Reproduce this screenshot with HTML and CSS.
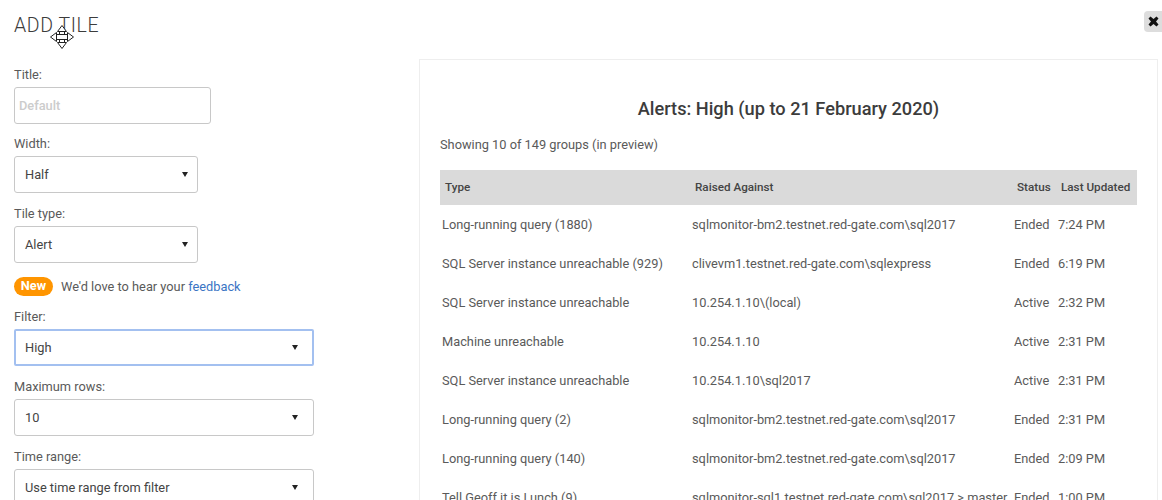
FILE: index.html
```html
<!DOCTYPE html>
<html>
<head>
    <meta name="viewport" content="width=device-width, initial-scale=1">
    <title>Add tile</title>
    <link rel="stylesheet" href="styles.css">
</head>
<body>
    <main>
        <header class="top">
            <h1>ADD TILE</h1>
            <button class="close" aria-label="Close">
                <svg width="11" height="11" viewBox="0 0 11 11"><path d="M2.5 0.5 5.5 3 8.5 0.5 10.5 2.5 8 5.5 10.5 8.5 8.5 10.5 5.5 8 2.5 10.5 0.5 8.5 3 5.5 0.5 2.5z" fill="#111"/></svg>
            </button>
        </header>
        <svg class="move-cursor" width="24" height="24" viewBox="0 0 24 24" fill="#fff" stroke="#222" stroke-width="1">
            <path d="M9.5 6.5H14.5V17.5H9.5z"/>
            <path d="M6.5 9.5H17.5V14.5H6.5z"/>
            <path d="M10 10H14V14H10z" stroke="none"/>
            <path d="M12 .5 16.5 6.5H7.5z"/>
            <path d="M12 23.5 16.5 17.5H7.5z"/>
            <path d="M.5 12 6.5 7.5V16.5z"/>
            <path d="M23.5 12 17.5 7.5V16.5z"/>
        </svg>

        <div class="content">
            <form class="settings">
                <div class="field">
                    <label>Title:</label>
                    <input class="text-input" type="text" placeholder="Default">
                </div>
                <div class="field">
                    <label>Width:</label>
                    <div class="select narrow">Half</div>
                </div>
                <div class="field">
                    <label>Tile type:</label>
                    <div class="select narrow">Alert</div>
                </div>
                <div class="notice">
                    <span class="badge">New</span>
                    <span>We'd love to hear your <a href="#">feedback</a></span>
                </div>
                <div class="field">
                    <label>Filter:</label>
                    <div class="select focused">High</div>
                </div>
                <div class="field">
                    <label>Maximum rows:</label>
                    <div class="select">10</div>
                </div>
                <div class="field">
                    <label>Time range:</label>
                    <div class="select">Use time range from filter</div>
                </div>
            </form>

            <section class="preview">
                <h2>Alerts: High (up to 21 February 2020)</h2>
                <p class="summary">Showing 10 of 149 groups (in preview)</p>
                <table>
                    <thead>
                        <tr>
                            <th class="col-type">Type</th>
                            <th class="col-raised">Raised Against</th>
                            <th class="col-status">Status</th>
                            <th class="col-updated">Last Updated</th>
                        </tr>
                    </thead>
                    <tbody>
                        <tr><td>Long-running query (1880)</td><td>sqlmonitor-bm2.testnet.red-gate.com\sql2017</td><td>Ended</td><td>7:24 PM</td></tr>
                        <tr><td>SQL Server instance unreachable (929)</td><td>clivevm1.testnet.red-gate.com\sqlexpress</td><td>Ended</td><td>6:19 PM</td></tr>
                        <tr><td>SQL Server instance unreachable</td><td>10.254.1.10\(local)</td><td>Active</td><td>2:32 PM</td></tr>
                        <tr><td>Machine unreachable</td><td>10.254.1.10</td><td>Active</td><td>2:31 PM</td></tr>
                        <tr><td>SQL Server instance unreachable</td><td>10.254.1.10\sql2017</td><td>Active</td><td>2:31 PM</td></tr>
                        <tr><td>Long-running query (2)</td><td>sqlmonitor-bm2.testnet.red-gate.com\sql2017</td><td>Ended</td><td>2:31 PM</td></tr>
                        <tr><td>Long-running query (140)</td><td>sqlmonitor-bm2.testnet.red-gate.com\sql2017</td><td>Ended</td><td>2:09 PM</td></tr>
                        <tr><td>Tell Geoff it is Lunch (9)</td><td>sqlmonitor-sql1.testnet.red-gate.com\sql2017 &gt; master</td><td>Ended</td><td>1:00 PM</td></tr>
                    </tbody>
                </table>
            </section>
        </div>
    </main>
</body>
</html>
```

FILE: styles.css
```css
:root {
    font-family: Roboto, "Liberation Sans", sans-serif;
    font-size: 12.8px;
    color: #5a5a5a;
}
html, body {
    height: 100%;
    margin: 0;
    overflow: hidden;
    background: #fff;
}
main {
    position: relative;
    height: 100%;
}

.top {
    display: flex;
    justify-content: space-between;
    align-items: flex-start;
    height: 59px;
    padding-left: 14px;
}
h1 {
    margin: 14px 0 0;
    font-size: 19.5px;
    line-height: 24px;
    font-weight: 300;
    color: #3c3c3c;
    letter-spacing: 0.6px;
}
.close {
    width: 18px;
    height: 21px;
    margin-top: 11px;
    padding: 0;
    border: 0;
    border-radius: 4px 0 0 4px;
    background: #ddd;
    display: flex;
    align-items: center;
    justify-content: center;
}
.move-cursor {
    position: absolute;
    left: 50px;
    top: 25px;
}

.content {
    display: flex;
    align-items: flex-start;
    padding-left: 14px;
}
.settings {
    width: 300px;
    margin-right: 105px;
    padding-top: 5.6px;
}
.field {
    margin-bottom: 10.6px;
}
.field label {
    display: block;
    height: 22px;
    line-height: 19px;
}
.text-input, .select {
    box-sizing: border-box;
    height: 37px;
    border: 1px solid #c8c8c8;
    border-radius: 3px;
    font: inherit;
    color: #444;
    background: #fff;
}
.text-input {
    display: block;
    width: 197px;
    padding: 0 4px;
    outline: none;
}
.text-input::placeholder {
    color: #ccc;
    font-weight: 500;
}
.select {
    display: flex;
    align-items: center;
    justify-content: space-between;
    width: 300px;
    padding: 0 15px 0 10px;
}
.select::after {
    content: "";
    border-left: 3px solid transparent;
    border-right: 3px solid transparent;
    border-top: 5px solid #222;
}
.select.narrow {
    width: 184px;
    padding-right: 9px;
}
.select.focused {
    border: 2px solid #a3c0f0;
    border-radius: 2px;
    padding: 0 14px 0 9px;
}

.notice {
    display: flex;
    align-items: center;
    gap: 8px;
    height: 19px;
    margin: 14px 0 11.6px;
}
.badge {
    box-sizing: border-box;
    width: 39px;
    height: 19px;
    line-height: 18px;
    border-radius: 10px;
    background: #ff9500;
    color: #fff;
    font-weight: 700;
    text-align: center;
}
a {
    color: #3a75c4;
    text-decoration: none;
}

.preview {
    box-sizing: border-box;
    width: 739px;
    height: 600px;
    padding: 0 20px;
    border: 1px solid #eee;
}
h2 {
    margin: 37px 0 0;
    font-size: 18.2px;
    line-height: 24px;
    font-weight: 500;
    color: #3c3c3c;
    text-align: center;
}
.summary {
    margin: 15px 0 0;
    line-height: 18px;
}
table {
    width: 697px;
    margin-top: 16px;
    border-collapse: collapse;
    table-layout: fixed;
}
th {
    height: 33px;
    padding: 0 0 2px 5px;
    background: #dadada;
    font-size: 11.7px;
    font-weight: 500;
    text-align: left;
    color: #444;
    white-space: nowrap;
}
td {
    height: 39px;
    padding: 0 0 0 2px;
    white-space: nowrap;
}
.col-type { width: 245px; }
.col-raised { width: 317px; }
.col-status { width: 39px; }
```
